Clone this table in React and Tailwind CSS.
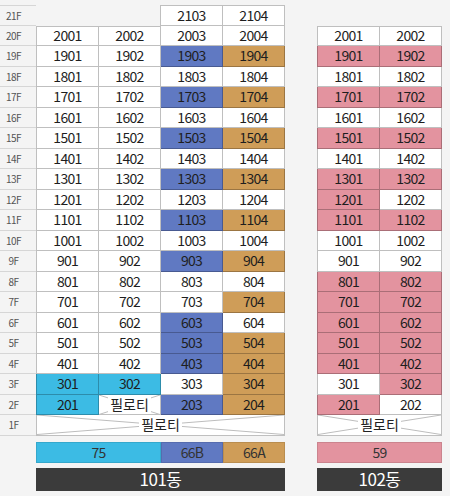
import React from "react";

const C = {
  w: "bg-white",
  b: "bg-[#6079c2]",
  o: "bg-[#cf9d58]",
  c: "bg-[#3cbbe4]",
  p: "bg-[#e3939f]",
};

// 101동: floor -> [color per column]
const b101 = {
  20: "wwww", 19: "wwbo", 18: "wwww", 17: "wwbo", 16: "wwww", 15: "wwbo",
  14: "wwww", 13: "wwbo", 12: "wwww", 11: "wwbo", 10: "wwww", 9: "wwbo",
  8: "wwww", 7: "wwwo", 6: "wwbw", 5: "wwbo", 4: "wwbo", 3: "ccwo", 2: "cxbo",
};

const b102 = {
  20: "ww", 19: "pp", 18: "ww", 17: "pp", 16: "ww", 15: "pp", 14: "ww",
  13: "pp", 12: "pw", 11: "pp", 10: "ww", 9: "ww", 8: "pp", 7: "pp",
  6: "pp", 5: "pp", 4: "pp", 3: "wp", 2: "pw",
};

const floors = Array.from({ length: 19 }, (_, i) => 20 - i);
const font = { fontFamily: '"Noto Sans CJK KR", "Noto Sans", sans-serif' };

function Cross() {
  return (
    <svg className="absolute inset-0 w-full h-full" preserveAspectRatio="none" viewBox="0 0 100 100">
      <line x1="0" y1="0" x2="100" y2="100" stroke="#bdbdbd" strokeWidth="1" vectorEffect="non-scaling-stroke" />
      <line x1="0" y1="100" x2="100" y2="0" stroke="#bdbdbd" strokeWidth="1" vectorEffect="non-scaling-stroke" />
    </svg>
  );
}

function Pilotti({ className }) {
  return (
    <div className={`relative flex items-center justify-center bg-white ${className}`}>
      <Cross />
      <span className="relative bg-white px-[2px] leading-[15px] text-[14px] text-[#222]">필로티</span>
    </div>
  );
}

function Cell({ color, first, top, children }) {
  const cls = `${first ? "w-[63px] border-l" : "w-[62px]"} ${top ? "border-t" : ""}`;
  if (color === "x") {
    return <Pilotti className={`h-full border-r border-b border-black/25 ${cls}`} />;
  }
  return (
    <div
      className={`h-full flex items-center justify-center border-r border-b border-black/25 text-[14px] tracking-[-0.7px] text-[#1e1e1e] ${C[color]} ${cls}`}
    >
      {children}
    </div>
  );
}

function Building({ data, cols, top, types, name }) {
  const width = cols === 4 ? "w-[249px]" : "w-[125px]";
  return (
    <div className="flex flex-col">
      <div className="flex h-[20.5px]">
        {top ? (
          <>
            <div className="w-[124px]" />
            <Cell color="w" first top>{top[0]}</Cell>
            <Cell color="w" top>{top[1]}</Cell>
          </>
        ) : null}
      </div>
      {floors.map((f) => (
        <div key={f} className="flex h-[20.5px]">
          {data[f].split("").map((c, i) => (
            <Cell key={i} color={c} first={i === 0} top={f === 20 && (!top || i < 2)}>
              {f * 100 + i + 1}
            </Cell>
          ))}
        </div>
      ))}
      <Pilotti className={`h-[20.5px] ${width} border-l border-r border-b border-black/25`} />
      <div className={`flex h-[21px] mt-[6px] ${width} text-[14px] text-[#333] tracking-[-0.7px]`}>
        {types.map((t, i) => (
          <div
            key={i}
            className={`flex items-center justify-center border border-black/10 ${C[t.c]} ${t.w}`}
          >
            {t.label}
          </div>
        ))}
      </div>
      <div className={`flex items-center justify-center h-[23px] mt-[5px] ${width} bg-[#3b3b3b] text-white text-[17px] tracking-[-0.5px]`}>
        {name}
      </div>
    </div>
  );
}

export default function App() {
  return (
    <div className="min-h-screen w-[450px] bg-[#f4f4f4] pt-[5px]" style={font}>
      <div className="flex">
        {/* FLOOR LABELS */}
        <div className="flex flex-col w-[36px]">
          {Array.from({ length: 21 }, (_, i) => 21 - i).map((f) => (
            <div
              key={f}
              className={`flex items-center h-[20.5px] border-b border-[#d6d6d6] ${f === 21 ? "border-t" : ""}`}
            >
              <span className="w-[27px] text-center text-[10px] text-[#555] tracking-[-0.5px]">{f}F</span>
            </div>
          ))}
        </div>

        <Building
          data={b101}
          cols={4}
          top={[2103, 2104]}
          name="101동"
          types={[
            { label: "75", c: "c", w: "w-[125px]" },
            { label: "66B", c: "b", w: "w-[62px]" },
            { label: "66A", c: "o", w: "w-[62px]" },
          ]}
        />

        <div className="ml-[32px]">
          <Building
            data={b102}
            cols={2}
            name="102동"
            types={[{ label: "59", c: "p", w: "w-[125px]" }]}
          />
        </div>
      </div>
    </div>
  );
}
